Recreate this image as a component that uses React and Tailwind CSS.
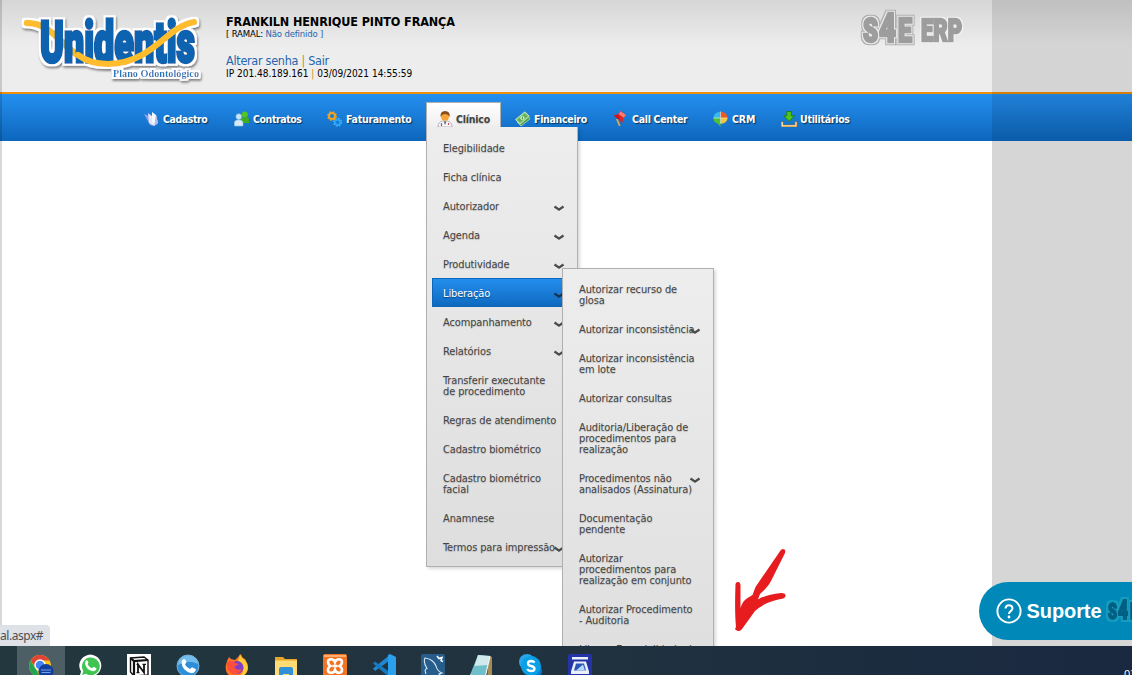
import React from "react";

const menuFont = "font-['Tahoma','DejaVu_Sans_Condensed','DejaVu_Sans',sans-serif] [font-stretch:condensed]";

const S = ({ children, vb = "0 0 16 16", className = "w-4 h-4" }) => (
  <svg viewBox={vb} className={"block shrink-0 " + className} fill="none">{children}</svg>
);

const BookIcon = () => (
  <S>
    <path d="M0 3l5 2 4 10-3-1z" fill="#8f9fe0" />
    <path d="M4 2l4 3 2 10-5-3z" fill="#dfe6fb" />
    <path d="M8 1l4 3 2 8-4 3-2-5z" fill="#f7f9ff" />
    <path d="M12 4l2 8-4 3z" fill="#b3bce8" />
  </S>
);
const PeopleIcon = () => (
  <S>
    <circle cx="10.800" cy="3.400" r="3" fill="#55c522" />
    <path d="M6.500 12V8.500q.5-2.500 4.500-2.500 4 0 4 3v3z" fill="#3fae1a" />
    <circle cx="4.800" cy="5.600" r="2.900" fill="#c6e4f8" stroke="#84b4d8" strokeWidth=".6" />
    <path d="M.4 15v-3.500Q.8 8.800 4.800 8.800t4.200 3V15z" fill="#d4eaf9" stroke="#8dbce0" strokeWidth=".6" />
  </S>
);
const GearsIcon = () => (
  <S>
    <circle cx="10.600" cy="11.300" r="2.600" stroke="#27a3f5" strokeWidth="2" />
    <circle cx="10.600" cy="11.300" r="3.900" stroke="#4db8ff" strokeWidth="1.200" strokeDasharray="1.600 1.450" />
    <circle cx="5" cy="5" r="3" stroke="#f5a51d" strokeWidth="2" />
    <circle cx="5" cy="5" r="4.300" stroke="#f5a51d" strokeWidth="1.200" strokeDasharray="1.700 1.700" />
  </S>
);
const DoctorIcon = () => (
  <S>
    <path d="M1 16q0-5 4.500-6h5Q15 11 15 16z" fill="#f8f8fb" stroke="#a3a3ad" strokeWidth=".8" />
    <path d="M6.800 10.500L8 14l1.400-3.500z" fill="#5a5c74" />
    <circle cx="8" cy="5.800" r="3.900" fill="#f5a533" />
    <path d="M3.500 6Q3 0 8 0q5.300 0 4.700 6Q11 2.800 8 3 5 2.800 3.500 6z" fill="#8a4d1c" />
    <path d="M4.500 12v3" stroke="#8d55bc" strokeWidth="1.200" />
    <path d="M11.500 12v2" stroke="#d34b56" strokeWidth="1.200" />
  </S>
);
const MoneyIcon = () => (
  <S>
    <path d="M2 11L12 3l3 5-9 7z" fill="#4f9f4c" stroke="#d7efcb" strokeWidth=".6" />
    <path d="M.5 8.500L10 .8l4.300 4.400L5 13.200z" fill="#86c877" stroke="#d7efcb" strokeWidth=".8" />
    <path d="M2.600 8.700L9.700 2.900l2.500 2.400-7 5.900z" fill="#5fae58" />
    <circle cx="7.400" cy="7" r="2.100" fill="#def1cd" />
    <path d="M7.400 5.600v2.800" stroke="#3a8f43" />
  </S>
);
const PinIcon = () => (
  <S>
    <path d="M3.800 8l3 7" stroke="#e8a44a" strokeWidth="1.800" />
    <path d="M.8 4.500L5 3l2.500-3L13 4l-3 3.500L9.500 12 5 8z" fill="#e32222" />
    <path d="M7.500.2L13 4l-2.200 2.800L5.600 3z" fill="#ff7a70" />
    <path d="M.8 4.500L5 4l2 3.800L5 8z" fill="#c4161c" />
  </S>
);
const PieIcon = () => (
  <S>
    <path d="M7.500 7H.5q0-5.800 7-6.500z" fill="#35b8ee" />
    <path d="M7.500 7h7q0-5.800-7-6.500z" fill="#ef5a23" />
    <path d="M7.500 7h7q0 5-7 6z" fill="#f8c633" />
    <path d="M7.500 7v9l-2.800-3.500Q.5 11.500.5 7z" fill="#4fc234" />
    <path d="M7.500.5v12M.5 7h14" stroke="#e9f5ee" strokeWidth=".6" />
  </S>
);
const DownloadIcon = () => (
  <S>
    <path d="M1.200 10.500v4.500h13.800v-4.500" stroke="#c26c10" strokeWidth="2.400" />
    <path d="M1.200 11v3.900h13.800V11" stroke="#ffe9a9" strokeWidth="1.300" />
    <path d="M5.800.5h4.600v4.300h3L8.100 10.600 2.800 4.800h3z" fill="#4fc61b" stroke="#217d0d" strokeWidth=".9" />
  </S>
);

const nav = [
  ["Cadastro", BookIcon, "w-[90px]", "tracking-[-0.420px]"],
  ["Contratos", PeopleIcon, "w-[93px]", "tracking-[-0.420px]"],
  ["Faturamento", GearsIcon, "w-[99px]", "tracking-[-0.270px]"],
  ["Clínico", DoctorIcon, "w-[75px] mr-[14px]", "tracking-[-0.200px]"],
  ["Financeiro", MoneyIcon, "w-[98px]", "tracking-[-0.300px]"],
  ["Call Center", PinIcon, "w-[100px]", "tracking-[-0.300px]"],
  ["CRM", PieIcon, "w-[68px]", "tracking-[-0.100px]"],
  ["Utilitários", DownloadIcon, "w-[80px]", "tracking-[-0.280px]"],
];

const clinico = [
  [["Elegibilidade"]],
  [["Ficha clínica"]],
  [["Autorizador"], true],
  [["Agenda"], true],
  [["Produtividade"], true],
  [["Liberação"], true, true],
  [["Acompanhamento"], true],
  [["Relatórios"], true],
  [["Transferir executante", "de procedimento"]],
  [["Regras de atendimento"]],
  [["Cadastro biométrico"]],
  [["Cadastro biométrico", "facial"]],
  [["Anamnese"]],
  [["Termos para impressão"], true],
];
const liberacao = [
  [["Autorizar recurso de", "glosa"]],
  [["Autorizar inconsistência"], true],
  [["Autorizar inconsistência", "em lote"]],
  [["Autorizar consultas"]],
  [["Auditoria/Liberação de", "procedimentos para", "realização"]],
  [["Procedimentos não", "analisados (Assinatura)"], true],
  [["Documentação", "pendente"]],
  [["Autorizar", "procedimentos para", "realização em conjunto"]],
  [["Autorizar Procedimento", "- Auditoria"]],
  [["Liberar Especialidade de"]],
];

const Menu = ({ items, className }) => (
  <ul className={"absolute w-[152px] border border-[#b0b0b0] bg-linear-to-b from-[#ededed] to-[#dedede] shadow-[2px_2px_3px_rgba(0,0,0,0.15)] px-[5px] pb-[5px] text-[11px] leading-[11px] tracking-[-0.130px] text-[#444] " + menuFont + " " + className}>
    {items.map(([lines, arrow, active], i) => (
      <li
        key={i}
        className={"relative pl-[11px] pt-[10px] pb-[8px] whitespace-nowrap " + (active ? "bg-linear-to-b from-[#2590f0] to-[#0d68be] text-white [text-shadow:0_1px_1px_#074a8c] shadow-[inset_0_0_0_1px_#0d66b8]" : "[text-shadow:0_1px_1px_rgba(0,0,0,0.2)]")}
      >
        {lines.map((l) => <div key={l}>{l}</div>)}
        {arrow && (
          <svg viewBox="0 0 12 7" className="absolute right-[7px] top-[14px] w-3 h-[7px]" fill="none">
            <path d="M1.500 1.500L6 4.600l4.500-3.100" stroke={active ? "#17324d" : "#4a4a4a"} strokeWidth="2.300" strokeLinejoin="round" />
          </svg>
        )}
      </li>
    ))}
  </ul>
);

const UnidentisLogo = () => (
  <svg viewBox="0 0 186 76" className="h-[76px] w-[186px]" fill="none">
    <defs>
      <filter id="rim" x="-10%" y="-20%" width="120%" height="140%">
        <feMorphology in="SourceAlpha" operator="dilate" radius="2.400" result="fat" />
        <feGaussianBlur in="fat" stdDeviation=".5" result="soft" />
        <feFlood floodColor="#fff" />
        <feComposite in2="soft" operator="in" result="white" />
        <feOffset in="soft" dx="1" dy="2" result="off" />
        <feGaussianBlur in="off" stdDeviation="1" result="shade" />
        <feFlood floodColor="#000" floodOpacity=".45" />
        <feComposite in2="shade" operator="in" result="shadow" />
        <feMerge>
          <feMergeNode in="shadow" />
          <feMergeNode in="white" />
          <feMergeNode in="SourceGraphic" />
        </feMerge>
      </filter>
    </defs>
    <g filter="url(#rim)">
      <path d="M7 12C30 12 40 32 56 43" stroke="#ffbd2e" strokeWidth="6.500" strokeLinecap="round" />
      <text x="20" y="50.500" textLength="155" lengthAdjust="spacingAndGlyphs" fill="#0a63b0" stroke="#0a63b0" strokeWidth="3.600" fontFamily="Roboto, sans-serif" fontWeight="900" fontSize="58">Unidentis</text>
      <path d="M58 44C74 56 100 56 122 44 145 31 153 15 174 11" stroke="#ffbd2e" strokeWidth="6.200" strokeLinecap="round" />
      <text x="93" y="66" textLength="86" lengthAdjust="spacingAndGlyphs" fontFamily="Liberation Serif, serif" fontSize="11" fontWeight="700" fill="#2474b8">Plano Odontológico</text>
    </g>
  </svg>
);

const S4ELogo = () => (
  <svg viewBox="0 0 108 42" className="h-[42px] w-[108px]" fontFamily="Roboto, sans-serif" fontWeight="900" fill="#9d9d9d" stroke="#9d9d9d">
    <defs>
      <filter id="ring" x="-10%" y="-20%" width="120%" height="140%">
        <feMorphology in="SourceAlpha" operator="dilate" radius="2.300" result="fat" />
        <feFlood floodColor="#adadad" />
        <feComposite in2="fat" operator="in" result="edge" />
        <feMorphology in="SourceAlpha" operator="dilate" radius="1.200" result="thin" />
        <feFlood floodColor="#eaeaea" />
        <feComposite in2="thin" operator="in" result="light" />
        <feMerge>
          <feMergeNode in="edge" />
          <feMergeNode in="light" />
          <feMergeNode in="SourceGraphic" />
        </feMerge>
      </filter>
      <filter id="glow" x="-10%" y="-20%" width="120%" height="140%">
        <feMorphology in="SourceAlpha" operator="dilate" radius="1.400" result="fat" />
        <feGaussianBlur in="fat" stdDeviation=".7" result="soft" />
        <feFlood floodColor="#f3f3f3" />
        <feComposite in2="soft" operator="in" result="light" />
        <feMerge>
          <feMergeNode in="light" />
          <feMergeNode in="SourceGraphic" />
        </feMerge>
      </filter>
    </defs>
    <g filter="url(#ring)" strokeWidth="2.600">
      <text x="6" y="35.500" fontSize="33" textLength="15" lengthAdjust="spacingAndGlyphs">S</text>
      <text x="22" y="35.500" fontSize="40" textLength="17" lengthAdjust="spacingAndGlyphs">4</text>
      <text x="41" y="35.500" fontSize="33" textLength="14" lengthAdjust="spacingAndGlyphs">E</text>
    </g>
    <text x="64" y="35" fontSize="31" textLength="41" lengthAdjust="spacingAndGlyphs" strokeWidth="2.400" filter="url(#glow)">ERP</text>
  </svg>
);

const T = ({ children, className = "w-6 h-6" }) => <S vb="0 0 24 24" className={className}>{children}</S>;

const taskIcons = [
  <T key="chrome" className="h-6 w-[26px]">
    <circle cx="11" cy="12" r="11" fill="#fbc116" />
    <path d="M1.500 6.500A11 11 0 0 1 20.500 6.500H11L7 14z" fill="#df4435" />
    <path d="M1.500 6.500L8 17l3 6A11 11 0 0 1 1.500 6.500z" fill="#23a455" />
    <circle cx="11" cy="11" r="5" fill="#4285f4" stroke="#fff" strokeWidth="1.400" />
    <circle cx="17" cy="17.500" r="7.500" fill="#123f9c" />
    <path d="M12 16h10M12.500 18.500h9" stroke="#6fa4ec" strokeWidth="1" />
  </T>,
  <T key="whatsapp">
    <path d="M1.500 23l1.500-5.500A11 11 0 1 1 7.500 21.500z" fill="#fff" />
    <path d="M4 21l1.300-4A8.900 8.900 0 1 1 8 19.800z" fill="#3fc351" />
    <path d="M8 6.500q1.500-1 2.500 2l-1 1.800q1.800 3 4.500 4l1.500-1.500 3 1.500q-.5 3-3.500 3Q8 16 7 9.500q0-2 1-3z" fill="#fff" />
  </T>,
  <T key="notion">
    <path d="M0 0h24v24H0z" fill="#fff" />
    <path d="M3.500 4l13.500-1 4 3v15l-14 1-3.500-4z" fill="#fff" stroke="#111" strokeWidth="1.400" />
    <path d="M3.500 4L7 7l14-1M7 7v15" stroke="#111" strokeWidth="2.200" />
    <path d="M11 18.500v-8l6 8v-8" stroke="#111" strokeWidth="1.800" />
    <path d="M9.500 10.300h2.500M15.500 10.300h3.500M9.500 18.700h3" stroke="#111" strokeWidth="1.200" />
  </T>,
  <T key="phone">
    <circle cx="12" cy="12" r="11" fill="#2c8fd8" stroke="#b7dcf5" strokeWidth=".6" />
    <path d="M2 11Q2 2 12 1.500 22 2 22 10 12 5 2 11z" fill="#72bdea" />
    <path d="M7 5.500q2-1.500 3.500 2.500L9 10.500q2 3.500 5 4.500l2-1.800 4 2q-1 4-4.500 4Q6 17 5.500 8.500q0-2 1.500-3z" fill="#fff" />
  </T>,
  <T key="firefox">
    <path d="M2 7l2-4 2 2 4 1L16 0q1 4 4 5 5 8 2 13-4 6-10 6Q0 23 .7 12z" fill="#ff7324" />
    <path d="M15 0q1 4 5 6 5 7 1 13-4 5-9 5 8-5 6-12-1-4-5-5z" fill="#ffce36" />
    <circle cx="12" cy="13.500" r="6.500" fill="#8040c6" />
    <path d="M2 8q5-3 8 1l4 1-5 3q2 4 8 2-3 6-9 5-7-3-6-12z" fill="#ff4f3c" />
  </T>,
  <T key="folder">
    <path d="M1 3h8l2 2h12v18H1z" fill="#e4a529" />
    <path d="M1 6.500h22V24H1z" fill="#ffdb73" />
    <path d="M5 24V15q0-2 2-2h10q2 0 2 2v9h-4v-4H9v4z" fill="#3290d8" />
  </T>,
  <T key="xampp">
    <rect width="24" height="24" rx="2" fill="#f27422" />
    <path d="M1 1h22v2H1z" fill="#ffad72" />
    <path d="M8 5.200q-3 0-3 2.800 0 2.500 2.500 4-2.500 1.500-2.500 4 0 2.800 3 2.800t4-2.800q1 2.800 4 2.800t3-2.800q0-2.500-2.500-4 2.500-1.500 2.500-4 0-2.800-3-2.800t-4 2.800q-1-2.800-4-2.800zM9.500 12h5" stroke="#fff" strokeWidth="2.600" />
  </T>,
  <T key="code">
    <path d="M17 1.500L1 14.500l2 2.500 14-10z" fill="#2088d2" />
    <path d="M17 23L1 9.500l2-2 14 10z" fill="#1679bf" />
    <path d="M16 1l2-1 6 3v18l-6 3-2-1z" fill="#2ba0ec" />
  </T>,
  <T key="mysql">
    <rect width="24" height="24" rx="2" fill="#275d8b" />
    <path d="M5 20Q3 15 6 14.500 2 8 4 4q8 1 11 8 1 5 6 7l-3 1 2 2" stroke="#d8e8f3" strokeWidth="1.100" />
    <path d="M16 2l2 2.500 3-1-1 3 2 1" stroke="#fff" strokeWidth="1.500" />
  </T>,
  <T key="notepad">
    <path d="M19 2l3 1v21h-5z" fill="#a98a52" />
    <path d="M8 1l12 1-5 22L0 21z" fill="#6fbfca" />
    <path d="M8 1l12 1-2 9L4.500 12z" fill="#cfe9ec" />
    <path d="M20 2l-5 22L0 21" stroke="#eaf5f5" strokeWidth="1.200" />
  </T>,
  <T key="skype">
    <circle cx="8" cy="8" r="8" fill="#28a8ea" />
    <circle cx="16" cy="17" r="7" fill="#0078d4" />
    <circle cx="12" cy="12" r="10" fill="#0aa0e5" />
    <path d="M15.500 8.700q-1-1.700-3.500-1.700-3 .1-3 2.500 0 2 3 2.500 3.500.7 3.500 2.800-.2 2.300-3.500 2.200-2.700 0-3.800-2" stroke="#fff" strokeWidth="2.300" />
  </T>,
  <T key="scan">
    <rect width="24" height="24" rx="2" fill="#2433a5" />
    <path d="M4 3h16v2.500H4zM6 7.500h12l3 10V20H3v-2.500z" fill="#e9effb" />
    <path d="M8 9.500h8l2 7H6z" fill="#2a55b7" />
    <path d="M15 10.500l2 6H8z" fill="#b9d7f7" />
  </T>,
];

export default function App() {
  return (
    <div className="relative flex h-[675px] w-[1132px] flex-col overflow-hidden bg-white font-['Tahoma','DejaVu_Sans_Condensed','DejaVu_Sans',sans-serif]">
      <header className="flex h-[94px] shrink-0 border-b-2 border-[#ee8e0b] bg-linear-to-b from-[#d6d6d6] to-[#ededed] to-50%">
        <div className="w-[226px] pl-5 pt-[11px]"><UnidentisLogo /></div>
        <div className={"w-[631px] pt-[15px] whitespace-nowrap " + menuFont}>
          <div className="h-[13px] text-[12.500px] font-bold leading-[13px] tracking-[-0.100px] text-black">FRANKILN HENRIQUE PINTO FRANÇA</div>
          <div className="h-[12px] text-[9.500px] leading-[12px] tracking-[-0.170px] text-black">[ RAMAL: <span className="text-[#2566ad]">Não definido ]</span></div>
          <div className="mt-[13px] h-[15px] text-[12.500px] leading-[15px] tracking-[-0.280px] text-[#2566ad]">Alterar senha <span className="text-[#d08a20]">|</span> Sair</div>
          <div className="h-[12px] text-[10px] leading-[12px] text-black">IP 201.48.189.161 <span className="text-[#d08a20]">|</span> 03/09/2021 14:55:59</div>
        </div>
        <div className="pt-[6px]"><S4ELogo /></div>
      </header>

      <nav className="flex h-[47px] shrink-0 bg-linear-to-b from-[#2590f0] to-[#0c66bc] pl-[144px] pt-2">
        {nav.map(([label, Icon, w, tr]) => {
          const on = label === "Clínico";
          return (
            <div key={label} className={"flex h-[39px] shrink-0 items-start pt-[9px] " + w + (on ? " border border-b-0 border-[#b0b0b0] bg-linear-to-b from-white to-[#eee] to-65% pl-[10px] !pt-[8px]" : "")}>
              <Icon />
              <span className={"ml-[3px] mt-[2px] whitespace-nowrap text-[10.500px] font-bold leading-[13px] " + menuFont + " " + tr + (on ? " text-[#444] [text-shadow:0_1px_1px_rgba(0,0,0,0.2)]" : " text-white [text-shadow:1px_1px_1px_rgba(0,0,0,0.6)]")}>{label}</span>
            </div>
          );
        })}
      </nav>

      <main className="flex min-h-0 flex-1 justify-end bg-white">
        <div className="w-[140px] bg-[#d6d6d6]" />
      </main>

      <div className="absolute right-0 top-0 h-[141px] w-[140px] bg-black/10" />
      <div className="absolute left-0 top-0 h-[625px] w-[2px] bg-black/15" />

      <Menu items={clinico} className="left-[426px] top-[127px] border-t-0 pt-[6px]" />
      <Menu items={liberacao} className="left-[562px] top-[268px] h-[420px] pt-[5px]" />

      <svg viewBox="0 0 90 100" className="absolute left-[720px] top-[540px] h-[100px] w-[90px]">
        <path d="M60.500 10.500Q62 8 64.500 9.500 66 11 64.500 14L51 41Q48 47 40 54l-2 5.500q8-5 23-6.500 5 0 4.500 3-.5 2.500-5 3Q45 62 35 71L22 89q-2 3-5 1.500-3-.5-1-3.500-1.500-15-.500-43 .5-2.500 3-2 2 .5 2 4v22q2-7 7-10l5-3 3-8z" fill="#e71c1f" />
      </svg>

      <div className="absolute left-0 top-[625px] flex h-[21px] w-[50px] items-center rounded-tr-[4px] bg-[#dee1e6] text-[12px] tracking-[-0.450px] text-[#4b5056] font-['Noto_Sans',sans-serif]">al.aspx#</div>

      <button className="absolute left-[979px] top-[582px] flex h-[58px] w-[200px] items-center rounded-full bg-[#0089b8] pl-[17px] text-white">
        <svg viewBox="0 0 26 26" className="h-[26px] w-[26px] shrink-0" fill="none" stroke="#fff">
          <circle cx="13" cy="13" r="11.600" strokeWidth="1.900" />
          <path d="M9.500 10.500Q9.700 7.200 13 7.200t3.500 3.100Q16.500 12 14.500 13.300 13 14.300 13 16" strokeWidth="2" />
          <circle cx="13" cy="19" r=".7" strokeWidth="1.400" />
        </svg>
        <span className="ml-[3px] w-[78px] text-[20px] font-bold leading-[24px] tracking-[-0.100px] font-['Liberation_Sans',sans-serif]">Suporte</span>
        <svg viewBox="0 0 54 32" className="ml-[2px] h-[32px] w-[54px] shrink-0" fontFamily="Roboto, sans-serif" fontWeight="900" fill="#045e84" stroke="#045e84" strokeWidth="1.800">
          <defs>
            <filter id="teal" x="-10%" y="-20%" width="120%" height="140%">
              <feMorphology in="SourceAlpha" operator="dilate" radius="1.700" result="fat" />
              <feFlood floodColor="#129cbc" />
              <feComposite in2="fat" operator="in" result="edge" />
              <feMerge>
                <feMergeNode in="edge" />
                <feMergeNode in="SourceGraphic" />
              </feMerge>
            </filter>
          </defs>
          <g filter="url(#teal)">
            <text x="3" y="24" fontSize="22" textLength="9" lengthAdjust="spacingAndGlyphs">S</text>
            <text x="13" y="24" fontSize="26" textLength="10" lengthAdjust="spacingAndGlyphs">4</text>
            <text x="25" y="24" fontSize="22" textLength="9" lengthAdjust="spacingAndGlyphs">E</text>
          </g>
        </svg>
      </button>

      <footer className="relative flex h-[29px] shrink-0 overflow-hidden bg-linear-to-r from-[#22373e] via-[#20323f] to-[#1a2840] pl-[17px]">
        {taskIcons.map((ic, i) => (
          <div key={i} className={"flex w-[49px] shrink-0 justify-center pt-2 " + (i === 0 ? "bg-[#4d5e65] !w-[48px]" : "")}>{ic}</div>
        ))}
        <span className="absolute left-[1124px] top-[21px] text-[11px] leading-[14px] text-white font-['Open_Sans',sans-serif]">03/09/2021</span>
      </footer>
    </div>
  );
}
